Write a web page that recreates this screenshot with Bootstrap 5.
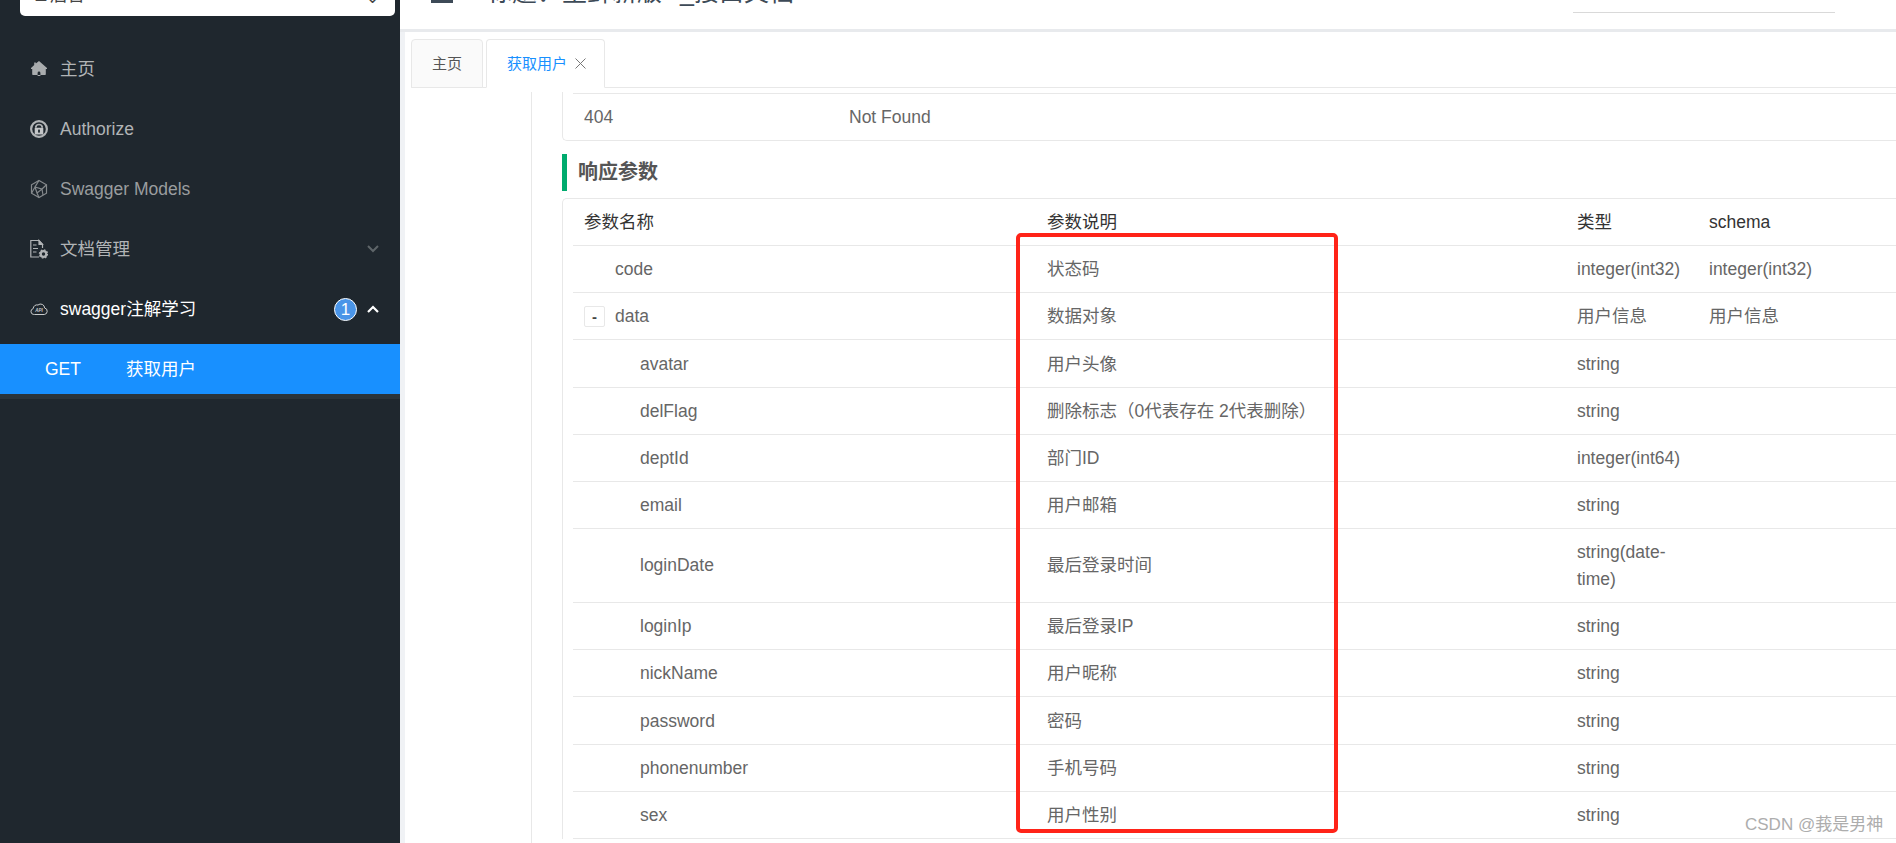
<!DOCTYPE html>
<html lang="zh-CN">
<head>
<meta charset="utf-8">
<title>获取用户</title>
<link href="https://cdn.jsdelivr.net/npm/bootstrap@5.3.0/dist/css/bootstrap.min.css" rel="stylesheet">
<style>
html,body{height:843px;overflow:hidden;background:#fff}
body{font-family:"Liberation Sans","Noto Sans CJK SC",sans-serif;font-size:17.5px;line-height:27px;color:#666}
.shell{height:843px;position:relative;overflow:hidden}
.rail-side{width:400px;flex:none;background:#1f272e;height:843px}
.search-clip{width:375px;height:16px;margin-left:20px;background:#fff;border-radius:0 0 5px 5px;overflow:hidden;padding:0 15px;color:#444}
.search-clip>span{margin-bottom:5px;line-height:27px;flex:none}
.search-lead{font-size:12px;margin-right:3px}
.search-gap{margin-bottom:23px}
.side-nav .nav-link{height:60px;padding:0 20px 0 30px;color:#b1b4b6;font-size:17.5px;gap:12px}
.side-nav .nav-link.dim{color:#9a9d9f}
.side-nav .nav-link.open{color:#fff}
.ico{width:18px;height:20px;flex:none;display:block}
.count-pill{width:23px;height:23px;border-radius:50%;background:#4a95e8;border:1px solid #fff;color:#fff;font-size:17px;line-height:21px;text-align:center;margin-right:-3px}
.api-row{height:50px;margin-top:5px;background:#1890ff;color:#fff;padding-left:45px;font-size:17.5px}
.api-row .verb{width:81px}
.rail-foot{height:5px;background:#2a343b}
.main-col{min-width:0;height:843px}
.top-head{height:32px;border-bottom:3px solid #e8eaed;overflow:hidden;background:#fff;padding-left:31px}
.burger{width:22px;flex:none;margin-bottom:26px;display:block}
.head-title{font-size:25px;line-height:30px;color:#3d4a57;margin-left:34px;margin-bottom:22px;flex:none;white-space:nowrap}
.head-tail{margin-left:18px}
.head-search{width:262px;height:1px;background:#d9d9d9;margin:12px 61px 0 auto;flex:none;align-self:flex-start}
.body-wrap{border-left:5px solid #f0f2f5;min-height:0;background:#fff}
.tab-band{height:60px;padding:7px 0 0 6px}
.tab-band .nav-tabs{height:49px;border-bottom:1px solid #e8e8e8;gap:3px;font-size:15px;line-height:20px}
.tab-band .nav-link{height:49px;padding:0 20px;background:#fafafa;border:1px solid #e8e8e8;border-radius:4px 4px 0 0;color:#555;margin:0;display:flex;align-items:center}
.tab-band .nav-link.active{background:#fff;color:#1890ff;border-color:#e8e8e8 #e8e8e8 #fff;padding:0 18px 0 20px;gap:8px}
.tab-x{width:11px;height:11px;display:block}
.doc-area{min-height:0;overflow:hidden}
.doc-rail{width:127px;flex:none;border-right:1px solid #e8e8e8}
.doc-pane{padding-left:30px;min-width:0}
.param-box{border:1px solid #e8e8e8;border-right:0;padding-left:10px;background:#fff}
.param-box.first{border-top:0;border-radius:0 0 0 5px;padding-top:1px}
.param-box.second{border-bottom:0;border-radius:5px 0 0 0}
.param-table{table-layout:fixed;margin:0;color:#666;--bs-table-color:#666;--bs-border-color:#e8e8e8;border-color:#e8e8e8}
.param-table td,.param-table th{padding:9.5px 11px;line-height:27px;font-weight:400;vertical-align:middle;border-color:#e8e8e8;word-break:normal}
.param-table th{color:#333}
.param-table .row-plus td{padding-top:10.5px}
.first .param-table tr{border-top:1px solid #e8e8e8}
.first .param-table tr td{border-bottom:0}
.c-name{width:463px}.c-desc{width:530px}.c-type{width:132px}
.c-code{width:265px}
.lvl-1{padding-left:42px!important}
.lvl-2{padding-left:67px!important}
.sec-title{height:37px;margin:13px 0 7px;border-left:5px solid #00ab6e;padding-left:11px;font-size:20px;font-weight:700;line-height:37px;color:#555}
.fold-btn{width:21px;height:21px;padding:0;border:1px solid #e8e8e8;border-radius:2px;background:#fff;color:#444;font-size:15px;font-weight:700;line-height:17px;margin-right:10px;--bs-btn-border-color:#e8e8e8}
.red-mark{position:absolute;left:1016px;top:233px;width:322px;height:600px;border:4px solid #ff2318;border-radius:5px;pointer-events:none}
.wm-mark{position:absolute;left:1745px;top:813px;font-size:17px;line-height:24px;color:#adadad;white-space:nowrap}
</style>
</head>
<body>
<div class="shell d-flex">
  <aside class="rail-side d-flex flex-column">
    <div class="search-clip search-gap d-flex align-items-end justify-content-between">
      <span><span class="search-lead">二</span>后台</span><span>⌄</span>
    </div>
    <nav class="nav flex-column side-nav">
      <a class="nav-link d-flex align-items-center" href="#">
        <svg class="ico" viewBox="0 0 18 20" fill="#a9acae"><path fill-rule="evenodd" d="M9 2 5.800 4.600V3.500H4.200v2.500L1 9v1.100h1.200v5.200a.7.7 0 0 0 .7.700h12.200a.7.7 0 0 0 .7-.7v-5.200H17V9zM7.600 17v-3a1.400 1.400 0 0 1 2.800 0v3z"/></svg>
        <span>主页</span>
      </a>
      <a class="nav-link d-flex align-items-center" href="#">
        <svg class="ico" viewBox="0 0 18 20"><circle cx="9" cy="10" r="7.900" fill="#1f272e" stroke="#b1b4b6" stroke-width="2.200"/><path d="M5.700 8.800a3.300 3.300 0 0 1 6.600 0" fill="none" stroke="#b1b4b6" stroke-width="1.700"/><rect x="4.700" y="8.800" width="8.600" height="6.700" rx=".6" fill="#c4c6c8"/><rect x="8.100" y="10.600" width="1.800" height="3" fill="#1f272e"/></svg>
        <span>Authorize</span>
      </a>
      <a class="nav-link dim d-flex align-items-center" href="#">
        <svg class="ico" viewBox="0 0 18 20" fill="none" stroke="#85898c" stroke-width="1.200"><path d="M9 1.500 16.500 5.800v8.400L9 18.500 1.500 14.200V5.800z"/><path d="M9 1.500 5 8l7 2 4.500-4.200M5 8l-3.500 6.200M5 8l2 6 5-4 1 6M7 14l2 4.500"/></svg>
        <span>Swagger Models</span>
      </a>
      <a class="nav-link d-flex align-items-center" href="#">
        <svg class="ico" viewBox="0 0 18 20" fill="none" stroke="#b1b4b6" stroke-width="1.200"><path d="M9 18H.8V1.500h8l3.700 3.700V9"/><path d="M9 1.500v4h3.500z" fill="#b1b4b6"/><path d="M3 6h3.500M3 9.500h5M3 13h3.500"/><circle cx="13.500" cy="15" r="2.800" stroke-width="2.200"/><circle cx="13.500" cy="15" r="4.100" stroke-width="1.200" stroke-dasharray="1.600 1.600"/></svg>
        <span>文档管理</span>
        <svg class="ms-auto" width="14" height="10" viewBox="0 0 14 10" fill="none" stroke="#5e6569" stroke-width="2"><path d="M2 2l5 5 5-5"/></svg>
      </a>
      <a class="nav-link open d-flex align-items-center" href="#">
        <svg class="ico" viewBox="0 0 18 20" fill="none" stroke="#c9cbcc" stroke-width="1"><path d="M4.500 15.500H3.800a3 3 0 0 1-.6-5.900A3.800 3.800 0 0 1 8 6a4 4 0 0 1 6.600 3 3.300 3.300 0 0 1-.3 6.500z"/><text x="9" y="13.300" font-size="4.500" font-style="italic" font-weight="700" text-anchor="middle" fill="#c9cbcc" stroke="none" font-family="Liberation Sans">API</text></svg>
        <span>swagger注解学习</span>
        <span class="count-pill ms-auto">1</span>
        <svg width="14" height="10" viewBox="0 0 14 10" fill="none" stroke="#fff" stroke-width="2.200"><path d="M2 8l5-5 5 5"/></svg>
      </a>
    </nav>
    <div class="api-row d-flex align-items-center"><span class="verb">GET</span><span>获取用户</span></div>
    <div class="rail-foot"></div>
  </aside>

  <div class="main-col flex-grow-1 d-flex flex-column">
    <header class="top-head d-flex align-items-end">
      <svg class="burger" height="20" viewBox="0 0 22 20" fill="#3d4a57"><rect y="0" width="22" height="3"/><rect y="8" width="22" height="3"/><rect y="17" width="22" height="3"/></svg>
      <div class="head-title">标题：生鲜新版<span class="head-tail">_接口文档</span></div>
      <div class="head-search"></div>
    </header>
    <div class="body-wrap flex-grow-1 d-flex flex-column">
      <div class="tab-band">
        <ul class="nav nav-tabs">
          <li class="nav-item"><a class="nav-link" href="#">主页</a></li>
          <li class="nav-item"><a class="nav-link active" href="#">获取用户<svg class="tab-x" viewBox="0 0 11 11" fill="none" stroke="#777" stroke-width="1"><path d="M.5.5l10 10M10.500.5l-10 10"/></svg></a></li>
        </ul>
      </div>
      <div class="doc-area flex-grow-1 d-flex">
        <div class="doc-rail"></div>
        <div class="doc-pane flex-grow-1">
          <div class="param-box first">
            <table class="table param-table">
              <colgroup><col class="c-code"><col></colgroup>
              <tbody><tr><td>404</td><td>Not Found</td></tr></tbody>
            </table>
          </div>
          <div class="sec-title">响应参数</div>
          <div class="param-box second">
            <table class="table param-table">
              <colgroup><col class="c-name"><col class="c-desc"><col class="c-type"><col></colgroup>
              <thead><tr><th>参数名称</th><th>参数说明</th><th>类型</th><th>schema</th></tr></thead>
              <tbody>
                <tr><td class="lvl-1">code</td><td>状态码</td><td>integer(int32)</td><td>integer(int32)</td></tr>
                <tr><td><button type="button" class="btn fold-btn">-</button>data</td><td>数据对象</td><td>用户信息</td><td>用户信息</td></tr>
                <tr class="row-plus"><td class="lvl-2">avatar</td><td>用户头像</td><td>string</td><td></td></tr>
                <tr><td class="lvl-2">delFlag</td><td>删除标志（0代表存在 2代表删除）</td><td>string</td><td></td></tr>
                <tr><td class="lvl-2">deptId</td><td>部门ID</td><td>integer(int64)</td><td></td></tr>
                <tr><td class="lvl-2">email</td><td>用户邮箱</td><td>string</td><td></td></tr>
                <tr><td class="lvl-2">loginDate</td><td>最后登录时间</td><td>string(date-time)</td><td></td></tr>
                <tr><td class="lvl-2">loginIp</td><td>最后登录IP</td><td>string</td><td></td></tr>
                <tr><td class="lvl-2">nickName</td><td>用户昵称</td><td>string</td><td></td></tr>
                <tr class="row-plus"><td class="lvl-2">password</td><td>密码</td><td>string</td><td></td></tr>
                <tr><td class="lvl-2">phonenumber</td><td>手机号码</td><td>string</td><td></td></tr>
                <tr><td class="lvl-2">sex</td><td>用户性别</td><td>string</td><td></td></tr>
              </tbody>
            </table>
          </div>
        </div>
      </div>
    </div>
  </div>
  <div class="red-mark"></div>
  <div class="wm-mark">CSDN @莪是男神</div>
</div>
<script src="https://cdn.jsdelivr.net/npm/bootstrap@5.3.0/dist/js/bootstrap.bundle.min.js"></script>
</body>
</html>
